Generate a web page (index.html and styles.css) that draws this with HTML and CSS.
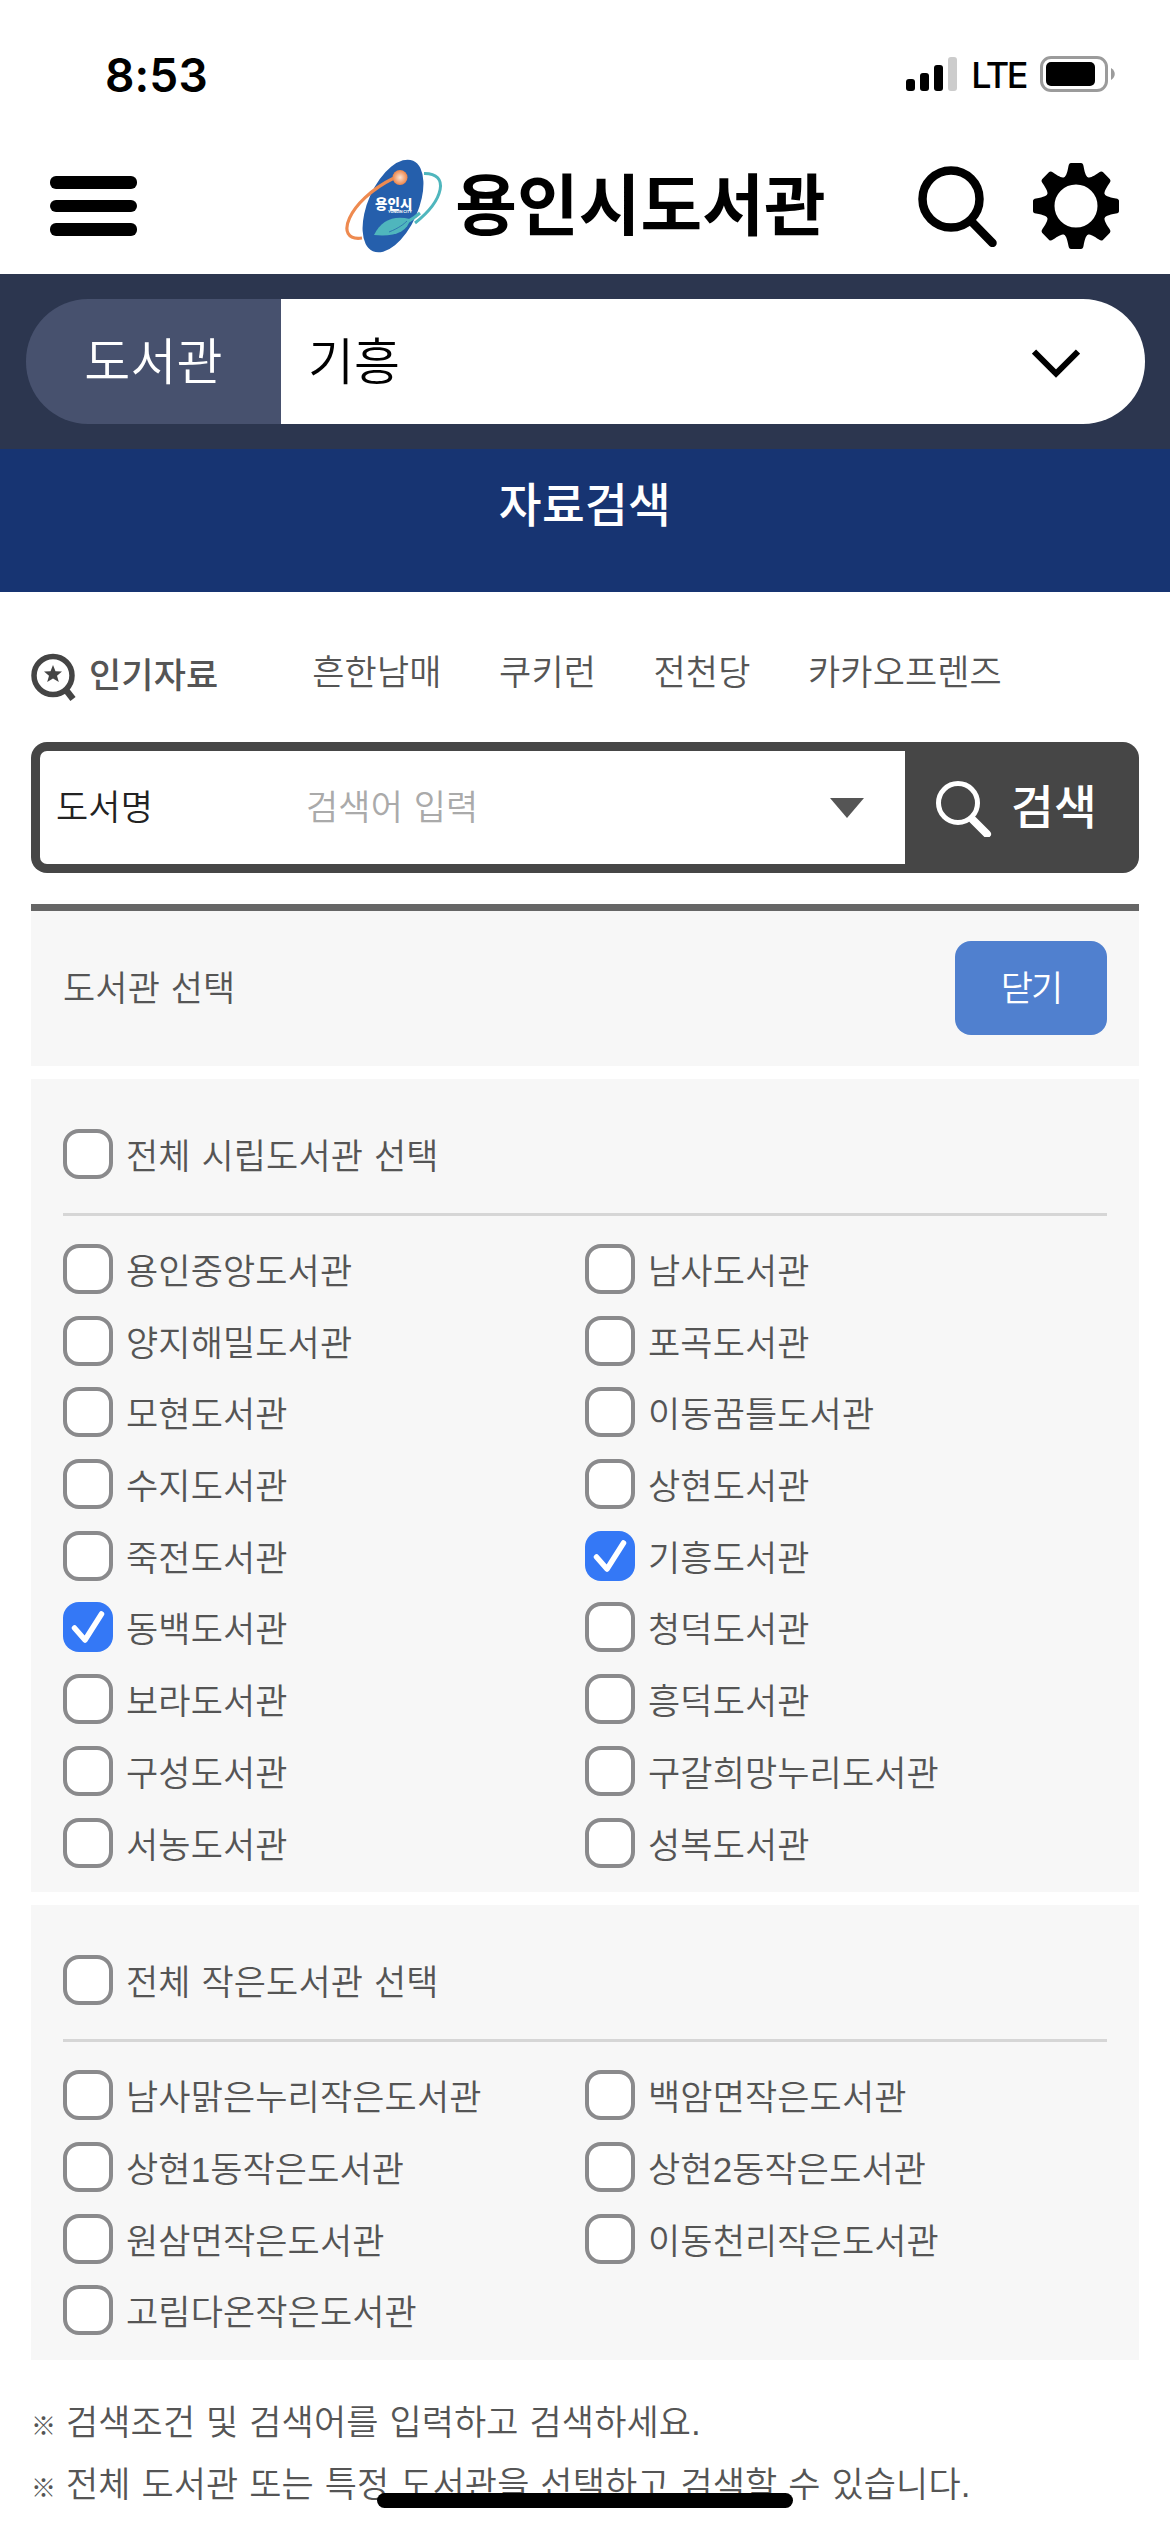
FILE: index.html
```html
<!DOCTYPE html>
<html lang="ko">
<head>
    <meta charset="UTF-8">
    <meta name="viewport" content="width=device-width, initial-scale=1.0">
    <title>용인시도서관</title>
    <link rel="stylesheet" href="styles.css">
</head>
<body>
    <div class="status-bar">
        <span class="time">8:53</span>
        <div class="status-icons">
            <svg class="signal" width="51" height="34" viewBox="0 0 51 34">
                <rect x="0" y="22" width="9" height="12" rx="3"/>
                <rect x="14" y="16" width="9" height="18" rx="3"/>
                <rect x="28" y="8" width="9" height="26" rx="3"/>
                <rect x="42" y="0" width="9" height="34" rx="3" fill="#ccc"/>
            </svg>
            <span class="network">LTE</span>
            <svg class="battery" width="75" height="36" viewBox="0 0 75 36">
                <rect x="1.5" y="1.5" width="65" height="33" rx="9.5" fill="none" stroke="#9b9b9b" stroke-width="3"/>
                <rect x="6" y="6" width="49" height="24" rx="5"/>
                <path d="M71 12c5 3 5 9 0 12z" fill="#9b9b9b"/>
            </svg>
        </div>
    </div>

    <header class="header">
        <button class="menu-button">
            <span></span>
            <span></span>
            <span></span>
        </button>
        <h1 class="logo">
            <svg width="100" height="100" viewBox="0 0 100 100">
                <defs>
                    <radialGradient id="ball">
                        <stop offset="0" stop-color="#fbe3d3"/>
                        <stop offset="1" stop-color="#ee8448"/>
                    </radialGradient>
                </defs>
                <path d="M80 14.500C106 14 100 41 71 64" fill="none" stroke="#4fb6bd" stroke-width="3"/>
                <ellipse cx="49" cy="47" rx="25" ry="49.500" transform="rotate(24 49 47)" fill="#255fac"/>
                <path d="M50 19C3 42-11 83 18 79" fill="none" stroke="#ee8a50" stroke-width="3.200"/>
                <path d="M30 76C37 61 50 56 66 60 64 73 50 78 30 76z" fill="#4fb6bd"/>
                <path d="M55 66C62 64 68 61 76 54" fill="none" stroke="#4fb6bd" stroke-width="3"/>
                <path d="M45 73C55 69 60 65 63 62" fill="none" stroke="#255fac" stroke-width=".7"/>
                <circle cx="56" cy="18.500" r="7.500" fill="url(#ball)"/>
                <text x="31" y="50" class="mark-text">용인시</text>
                <text x="44" y="53.500" class="mark-sub">YONGIN CITY</text>
            </svg>
            <span>용인시도서관</span>
        </h1>
        <div class="header-tools">
            <svg width="82" height="84" viewBox="0 0 82 84" fill="none" stroke="#000">
                <circle cx="34" cy="36" r="28.500" stroke-width="8.500"/>
                <path d="M55 59l20.500 21" stroke-width="8.500" stroke-linecap="round"/>
            </svg>
            <svg width="86" height="86" viewBox="-43 -43 86 86">
                <defs>
                    <path id="tooth" d="M-14-27C-10-29-9-32-7.500-40Q-7-43-5-43H5Q7-43 7.500-40C9-32 10-29 14-27z"/>
                </defs>
                <circle r="26" fill="none" stroke="#000" stroke-width="9"/>
                <use href="#tooth"/>
                <use href="#tooth" transform="rotate(45)"/>
                <use href="#tooth" transform="rotate(90)"/>
                <use href="#tooth" transform="rotate(135)"/>
                <use href="#tooth" transform="rotate(180)"/>
                <use href="#tooth" transform="rotate(225)"/>
                <use href="#tooth" transform="rotate(270)"/>
                <use href="#tooth" transform="rotate(315)"/>
            </svg>
        </div>
    </header>

    <div class="library-bar">
        <div class="library-label">도서관</div>
        <div class="library-select">
            <span>기흥</span>
            <svg width="48" height="30" viewBox="0 0 48 30"><path d="M2 3.500l22 22 22-22" fill="none" stroke="#000" stroke-width="6"/></svg>
        </div>
    </div>

    <h2 class="page-title">자료검색</h2>

    <main class="content">
        <div class="popular">
            <svg width="46" height="48" viewBox="0 0 46 48">
                <circle cx="22" cy="22.500" r="19" fill="none" stroke="#444" stroke-width="5.500"/>
                <path d="M35 37l7 9" stroke="#444" stroke-width="6.500"/>
                <path d="M22 12l2.500 6.300 6.500.2-5 4.200 1.800 6.300-5.800-3.600-5.800 3.600 1.800-6.300-5-4.200 6.500-.2z" fill="#444"/>
            </svg>
            <strong>인기자료</strong>
            <ul>
                <li>흔한남매</li>
                <li>쿠키런</li>
                <li>전천당</li>
                <li>카카오프렌즈</li>
            </ul>
        </div>

        <div class="search-box">
            <div class="search-field">
                <span class="search-type">도서명</span>
                <span class="search-input">검색어 입력</span>
                <svg width="34" height="20" viewBox="0 0 34 20"><path d="M0 0h34L17 20z" fill="#555"/></svg>
            </div>
            <div class="search-button">
                <svg width="56" height="58" viewBox="0 0 56 58" fill="none" stroke="#fff">
                    <circle cx="22" cy="24" r="19.500" stroke-width="5"/>
                    <path d="M37 41l14 14" stroke-width="8" stroke-linecap="round"/>
                </svg>
                <span>검색</span>
            </div>
        </div>

        <div class="select-head">
            <span>도서관 선택</span>
            <button class="close-button">닫기</button>
        </div>

        <section class="library-group">
            <label class="check check-all"><input type="checkbox">전체 시립도서관 선택</label>
            <div class="library-list">
                <label class="check"><input type="checkbox">용인중앙도서관</label>
                <label class="check"><input type="checkbox">남사도서관</label>
                <label class="check"><input type="checkbox">양지해밀도서관</label>
                <label class="check"><input type="checkbox">포곡도서관</label>
                <label class="check"><input type="checkbox">모현도서관</label>
                <label class="check"><input type="checkbox">이동꿈틀도서관</label>
                <label class="check"><input type="checkbox">수지도서관</label>
                <label class="check"><input type="checkbox">상현도서관</label>
                <label class="check"><input type="checkbox">죽전도서관</label>
                <label class="check"><input type="checkbox" checked>기흥도서관</label>
                <label class="check"><input type="checkbox" checked>동백도서관</label>
                <label class="check"><input type="checkbox">청덕도서관</label>
                <label class="check"><input type="checkbox">보라도서관</label>
                <label class="check"><input type="checkbox">흥덕도서관</label>
                <label class="check"><input type="checkbox">구성도서관</label>
                <label class="check"><input type="checkbox">구갈희망누리도서관</label>
                <label class="check"><input type="checkbox">서농도서관</label>
                <label class="check"><input type="checkbox">성복도서관</label>
            </div>
        </section>

        <section class="library-group">
            <label class="check check-all"><input type="checkbox">전체 작은도서관 선택</label>
            <div class="library-list">
                <label class="check"><input type="checkbox">남사맑은누리작은도서관</label>
                <label class="check"><input type="checkbox">백암면작은도서관</label>
                <label class="check"><input type="checkbox">상현1동작은도서관</label>
                <label class="check"><input type="checkbox">상현2동작은도서관</label>
                <label class="check"><input type="checkbox">원삼면작은도서관</label>
                <label class="check"><input type="checkbox">이동천리작은도서관</label>
                <label class="check"><input type="checkbox">고림다온작은도서관</label>
            </div>
        </section>

        <div class="notes">
            <p><span class="note-mark">※</span> 검색조건 및 검색어를 입력하고 검색하세요.</p>
            <p><span class="note-mark">※</span> 전체 도서관 또는 특정 도서관을 선택하고 검색할 수 있습니다.</p>
        </div>
    </main>

    <div class="home-indicator"></div>
</body>
</html>
```

FILE: styles.css
```css
* {
    box-sizing: border-box;
}
html,
body {
    height: 2532px;
    overflow: hidden;
}
body {
    margin: 0;
    background: #fff;
    color: #555;
    font-family: "Liberation Sans", "Noto Sans CJK KR", sans-serif;
    font-size: 35px;
    font-weight: 350;
    line-height: 50px;
    letter-spacing: .12px;
    word-spacing: 1px;
}
h1, h2, p, ul {
    margin: 0;
    padding: 0;
}
svg {
    display: block;
    flex: none;
}

/* status bar */
.status-bar {
    height: 141px;
    padding: 49px 55px 0 105px;
    display: flex;
    justify-content: space-between;
    color: #000;
    font-family: Inter, sans-serif;
}
.time {
    padding-top: 1px;
    font-size: 46px;
    font-weight: 600;
}
.status-icons {
    display: flex;
    align-items: center;
    height: 50px;
}
.network {
    margin: 2px 14px 0 14px;
    font-size: 36px;
    font-weight: 450;
    letter-spacing: -2.500px;
}

/* header */
.header {
    height: 133px;
    padding: 18px 51px 0 50px;
    display: flex;
    align-items: flex-start;
    justify-content: space-between;
}
.menu-button {
    width: 87px;
    margin-top: 17px;
    padding: 0;
    border: 0;
    background: none;
    display: flex;
    flex-direction: column;
    gap: 11px;
}
.menu-button span {
    height: 12.500px;
    border-radius: 6px;
    background: #000;
}
.logo {
    display: flex;
    align-items: flex-start;
    gap: 11px;
    margin-left: 116px;
    color: #000;
    font-size: 67px;
    font-weight: 700;
    line-height: 96px;
}
.mark-text {
    fill: #fff;
    font-size: 13.500px;
    font-weight: 900;
}
.mark-sub {
    fill: #fff;
    font-family: Inter, sans-serif;
    font-size: 3.600px;
    font-weight: 700;
    letter-spacing: 0;
    word-spacing: 0;
}
.header-tools {
    display: flex;
    gap: 34px;
    margin-top: 4px;
}

/* current library */
.library-bar {
    height: 175px;
    padding: 25px 25px 25px 26px;
    display: flex;
    background: #2c364f;
    font-size: 50px;
}
.library-label {
    width: 255px;
    border-radius: 62px 0 0 62px;
    background: #47516e;
    color: #fff;
    line-height: 129px;
    text-align: center;
}
.library-select {
    flex: 1;
    display: flex;
    align-items: center;
    justify-content: space-between;
    padding: 3px 65px 0 27px;
    border-radius: 0 62px 62px 0;
    background: #fff;
    color: #000;
    line-height: 120px;
}
.page-title {
    height: 143px;
    padding-top: 22px;
    background: #173472;
    color: #fff;
    font-size: 46.500px;
    font-weight: 500;
    line-height: 70px;
    letter-spacing: .3px;
    text-align: center;
}

/* search */
.content {
    padding: 0 31px;
}
.popular {
    height: 150px;
    padding-top: 61px;
    display: flex;
    align-items: flex-start;
}
.popular strong {
    margin: -2px 0 0 12px;
    font-weight: 500;
}
.popular ul {
    display: flex;
    gap: 57.500px;
    margin: -5px 0 0 94px;
    list-style: none;
}
.search-box {
    height: 131px;
    padding: 9px;
    display: flex;
    border-radius: 16px;
    background: #464646;
}
.search-field {
    width: 865px;
    padding: 1px 41px 0 16px;
    display: flex;
    align-items: center;
    border-radius: 7px 0 0 7px;
    background: #fff;
}
.search-type {
    width: 250px;
    color: #222;
}
.search-input {
    flex: 1;
    color: #aaa;
}
.search-button {
    flex: 1;
    display: flex;
    align-items: center;
    padding: 1px 0 0 31px;
    gap: 19px;
    color: #fff;
    font-size: 46.500px;
    font-weight: 500;
}

/* library selection */
.select-head {
    height: 162px;
    margin-top: 31px;
    padding: 30px 32px 0;
    display: flex;
    justify-content: space-between;
    border-top: 7px solid #666;
    background: #f7f7f7;
    line-height: 96px;
}
.close-button {
    width: 152px;
    height: 94px;
    padding: 2px 0 0;
    border: 0;
    border-radius: 16px;
    background: #5080cf;
    color: #fff;
    font: inherit;
    line-height: 50px;
    letter-spacing: -2px;
}
.library-group {
    margin-top: 13px;
    padding: 50px 32px 3px;
    background: #f7f7f7;
}
.check {
    height: 50px;
    display: flex;
    align-items: flex-start;
    line-height: 56px;
    white-space: nowrap;
}
.check input {
    appearance: none;
    flex: none;
    width: 50px;
    height: 50px;
    margin: 0 13px 0 0;
    border: 4.500px solid #8a8a8c;
    border-radius: 16px;
    background: #fff;
}
.check input:checked {
    border: 0;
    background: #3478f6 url("data:image/svg+xml,%3Csvg xmlns='http://www.w3.org/2000/svg' viewBox='0 0 50 50'%3E%3Cpath d='M11.500 26l10.500 12 16.500-26' fill='none' stroke='%23fff' stroke-width='5.500' stroke-linecap='round' stroke-linejoin='round'/%3E%3C/svg%3E");
}
.check-all {
    height: 87px;
    border-bottom: 3px solid #d6d6d6;
}
.library-list {
    padding: 28px 0 21.700px;
    display: grid;
    grid-template-columns: 1fr 1fr;
    row-gap: 21.700px;
}

/* notes */
.notes {
    padding-top: 32px;
    line-height: 62.500px;
    white-space: nowrap;
}
.note-mark {
    margin-right: -1px;
    font-size: 25px;
    line-height: 1;
}
.home-indicator {
    position: fixed;
    left: 377px;
    bottom: 24px;
    width: 416px;
    height: 15px;
    border-radius: 8px;
    background: #000;
}
```
